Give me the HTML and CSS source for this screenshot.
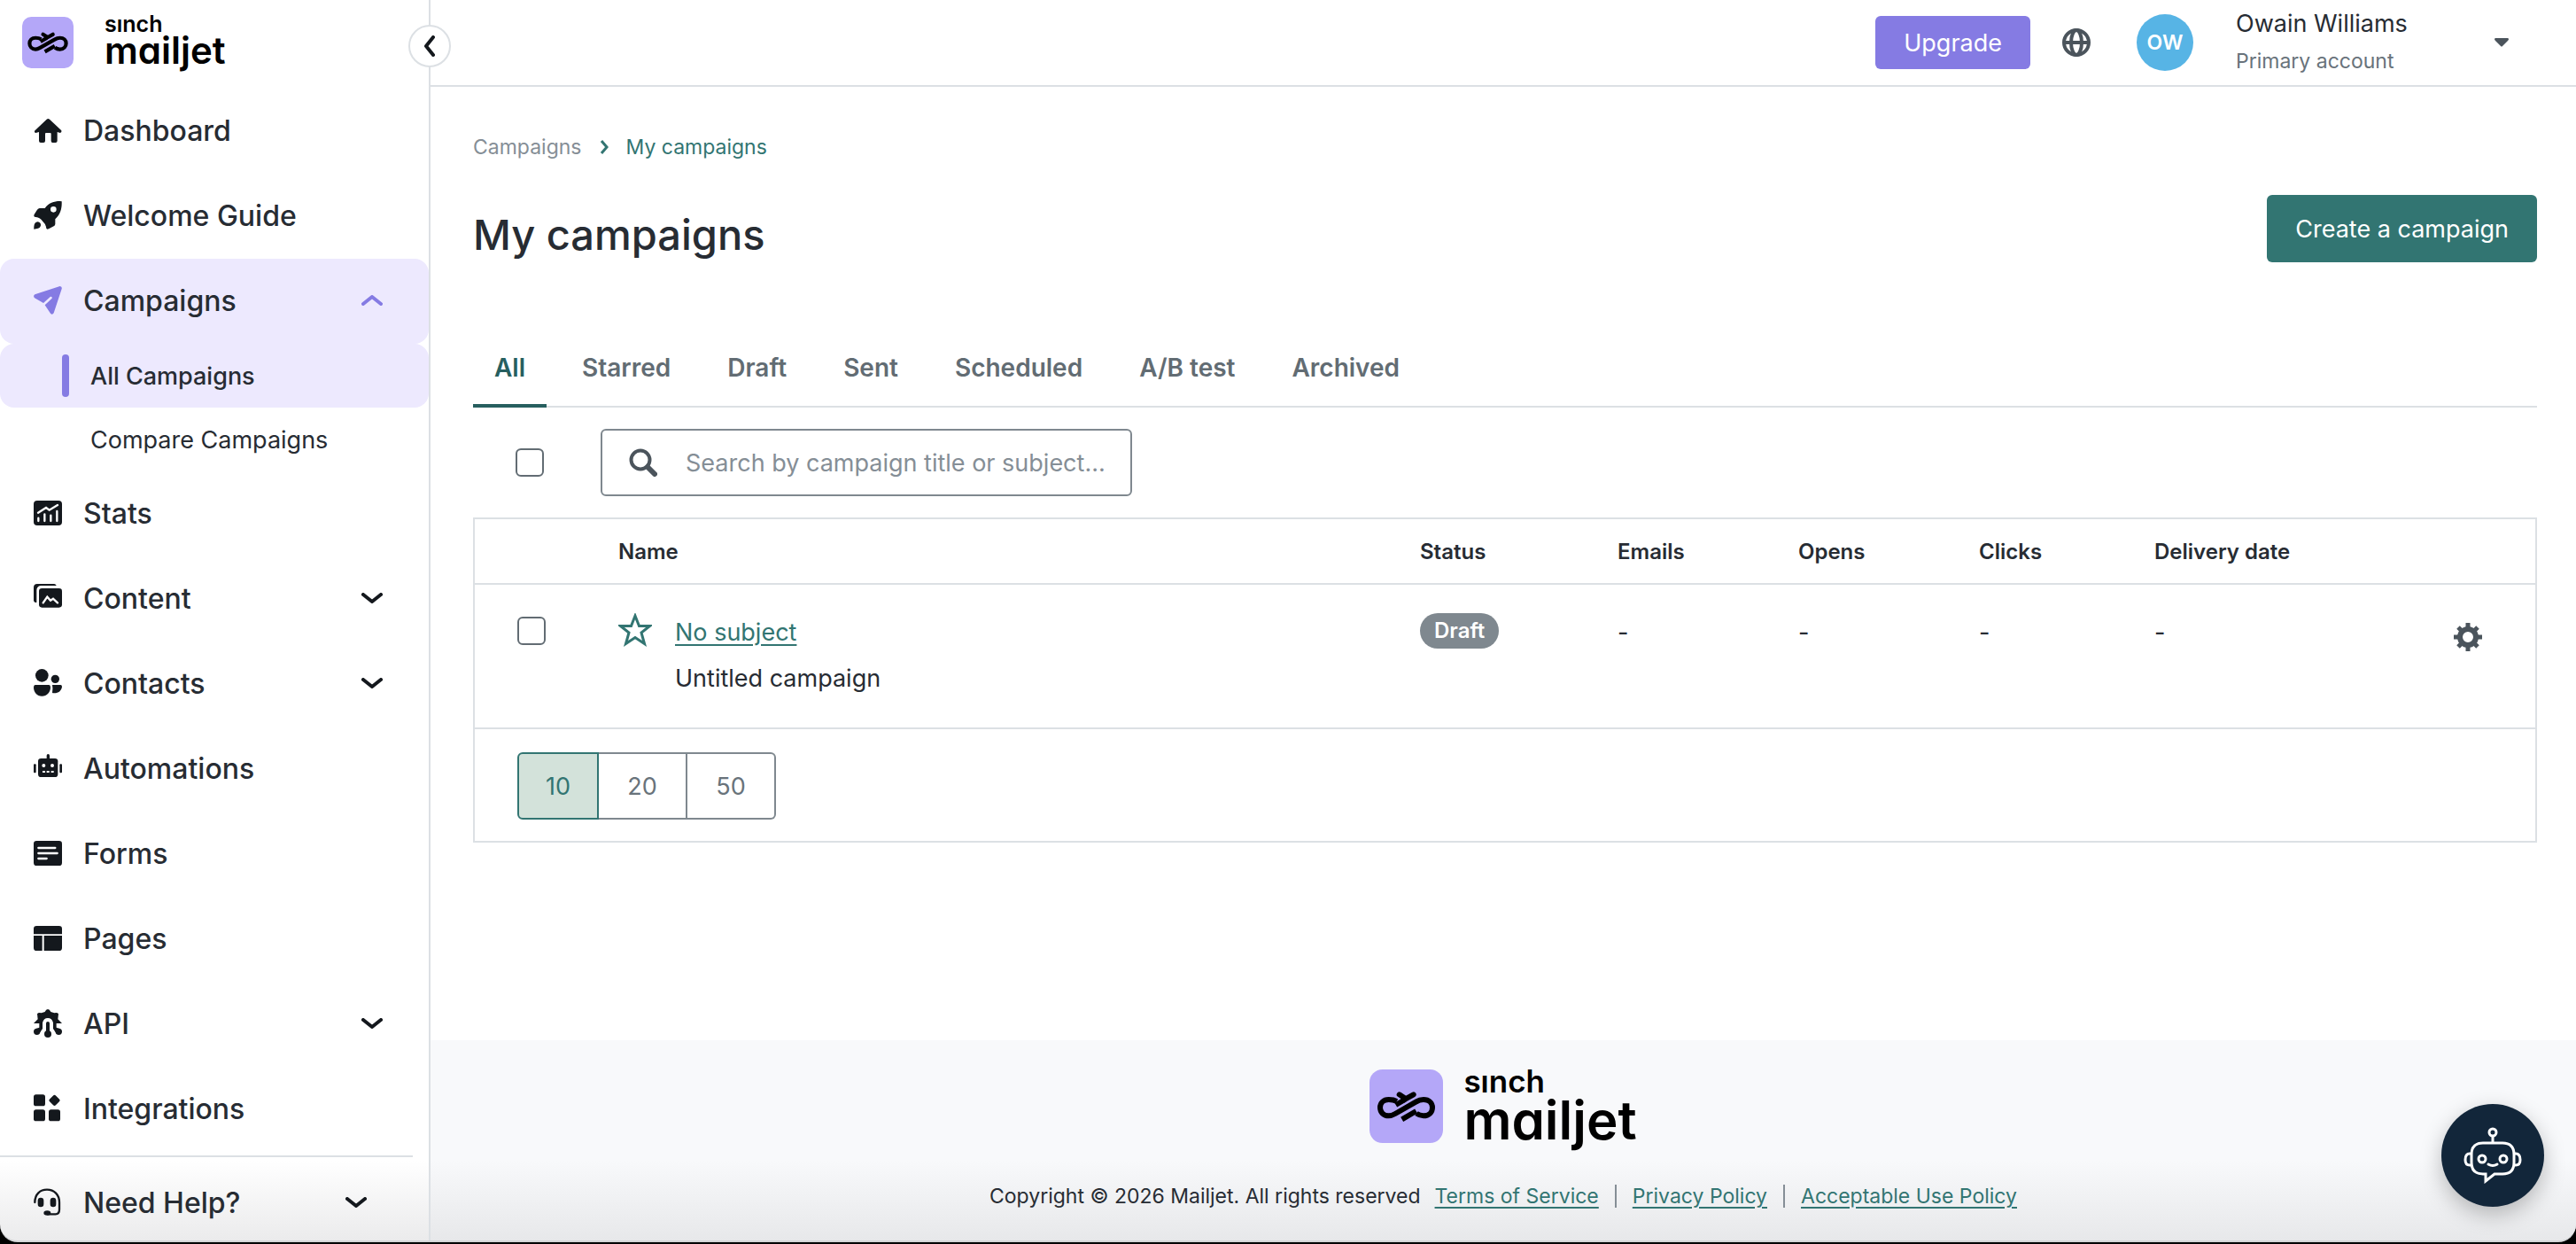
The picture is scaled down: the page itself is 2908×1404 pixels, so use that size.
FILE: index.html
```html
<!DOCTYPE html>
<html lang="en">
<head>
    <meta charset="UTF-8">
    <meta name="viewport" content="width=device-width, initial-scale=1.0">
    <title>My campaigns</title>
    <link rel="stylesheet" href="styles.css">
</head>
<body>
    <div class="app">
        <aside class="sidebar">
            <a href="#" class="logo">
                <svg class="logo-mark" viewBox="0 0 249 249" fill="none" stroke="#000" stroke-width="18">
                    <rect width="249" height="249" rx="44" fill="#b4a7f8" stroke="none"/>
                    <path d="M92 108C84 103 74 102 65 102C47 102 36 114 36 129C36 144 47 157 65 157C74 157 80 154 87 150L157 110C165 105 174 102 183 102C202 102 213 114 213 129C213 144 202 157 183 157C174 157 166 154 159 149"/>
                    <path d="M110 169L158 141M89 120L120 102" />
                    <path d="M115 104L149 85M101 85L118 96" stroke-linecap="round"/>
                </svg>
                <span class="logo-text"><span class="sinch">sınch</span><span class="mailjet">mailjet</span></span>
            </a>
            <nav class="menu">
                <a href="#" class="item">
                    <svg class="icon" viewBox="0 0 96 96"><path d="M44 11Q49 7 54 11L94 49Q96 56 90 57L80 54V84Q80 90 74 90H64Q59 90 59 84V60Q59 57 56 57H42Q39 57 39 60V84Q39 90 33 90H24Q18 90 18 84V54L7 57Q1 56 3 50Z"/></svg>
                    <span>Dashboard</span>
                </a>
                <a href="#" class="item">
                    <svg class="icon" viewBox="0 0 96 96"><path fill-rule="evenodd" d="M95 1C96 22 92 44 73 61V78Q72 83 68 85L51 94Q42 98 42 88Q41 78 31 69Q22 56 8 54Q-2 54 2 45L11 31Q14 25 20 24L38 24C50 6 70 0 88 0Q94 0 95 1ZM67 18A10 10 0 1 0 67 38A10 10 0 1 0 67 18Z"/><path d="M1 95C0 80 4 70 14 70Q25 73 24 82Q23 91 12 93Z"/></svg>
                    <span>Welcome Guide</span>
                </a>
                <a href="#" class="item active">
                    <svg class="icon" viewBox="0 0 96 96"><path d="M89 0Q97 1 95 9L68 91Q63 99 57 92L38 64L62 41Q64 35 57 35L33 57L3 40Q-3 33 4 28Z"/></svg>
                    <span>Campaigns</span>
                    <svg class="arrow" viewBox="0 0 24 12"><path d="M2 10L12 2L22 10"/></svg>
                </a>
                <a href="#" class="subitem active">All Campaigns</a>
                <a href="#" class="subitem">Compare Campaigns</a>
                <a href="#" class="item">
                    <svg class="icon" viewBox="0 0 96 96"><rect y="6" width="96" height="84" rx="12"/><path class="cut" d="M15 47L42 30L53 38L81 21M16 65V75M37 52V75M58 56V75M79 42V75"/></svg>
                    <span>Stats</span>
                </a>
                <a href="#" class="item">
                    <svg class="icon" viewBox="0 0 96 96"><path d="M0 56V12Q0 0 12 0H70Q76 1 77 6H24Q10 8 10 22V63Q1 63 0 56Z"/><rect x="18" y="15" width="78" height="65" rx="10"/><path class="cut" d="M32 64L46 44L57 56L66 50L81 64"/></svg>
                    <span>Content</span>
                    <svg class="arrow" viewBox="0 0 24 12"><path d="M2 2L12 10L22 2"/></svg>
                </a>
                <a href="#" class="item">
                    <svg class="icon" viewBox="0 0 96 96"><circle cx="28" cy="22" r="22"/><circle cx="73" cy="34" r="14"/><path d="M5 54H52Q57 54 57 62C57 78 45 92 28 92C11 92 0 78 0 62Q0 54 5 54ZM63 54H91Q96 54 96 60C94 74 84 82 70 82Q63 82 63 80Q66 68 63 54Z"/></svg>
                    <span>Contacts</span>
                    <svg class="arrow" viewBox="0 0 24 12"><path d="M2 2L12 10L22 2"/></svg>
                </a>
                <a href="#" class="item">
                    <svg class="icon" viewBox="0 0 96 96"><rect x="15" y="15" width="67" height="63" rx="10"/><rect x="44" width="10" height="20" rx="5"/><rect y="34" width="8" height="30" rx="3"/><rect x="88" y="34" width="8" height="30" rx="3"/><circle cx="34" cy="39" r="6" fill="#fff"/><circle cx="63" cy="39" r="6" fill="#fff"/><path fill="#fff" d="M30 57h9v6h-9zM44 57h9v6h-9zM59 57h9v6h-9z"/></svg>
                    <span>Automations</span>
                </a>
                <a href="#" class="item">
                    <svg class="icon" viewBox="0 0 96 96"><rect y="6" width="96" height="84" rx="10"/><path class="cut" d="M16 30H73M16 48H80M16 66H44"/></svg>
                    <span>Forms</span>
                </a>
                <a href="#" class="item">
                    <svg class="icon" viewBox="0 0 96 96"><path d="M10 6H86Q96 6 96 16V34H0V16Q0 6 10 6ZM0 39H29V90H10Q0 90 0 80ZM35 39H96V80Q96 90 86 90H35Z"/></svg>
                    <span>Pages</span>
                </a>
                <a href="#" class="item">
                    <svg class="icon" viewBox="0 0 96 96"><path d="M0 48L14 34L12 16Q16 10 26 13L38 9Q42 0 48 0Q54 0 58 9L70 13Q80 10 84 16L82 34L96 48H77V62L88 66V82L78 84L66 66V46Q62 30 48 30Q34 30 30 46V66L18 84L8 82V66L19 62V48Z"/><circle cx="11" cy="76" r="11"/><circle cx="85" cy="76" r="11"/><circle cx="48" cy="84" r="12"/><rect x="42" y="42" width="12" height="40" rx="6"/></svg>
                    <span>API</span>
                    <svg class="arrow" viewBox="0 0 24 12"><path d="M2 2L12 10L22 2"/></svg>
                </a>
                <a href="#" class="item">
                    <svg class="icon" viewBox="0 0 96 96"><rect y="1" width="39" height="39" rx="8"/><rect y="52" width="39" height="39" rx="8"/><rect x="51" y="52" width="39" height="39" rx="8"/><rect x="56" y="6" width="29" height="29" rx="6" transform="rotate(45 70.500 20.500)"/></svg>
                    <span>Integrations</span>
                </a>
            </nav>
            <button class="item help">
                <svg class="icon" viewBox="0 0 96 96"><path fill="none" stroke="currentColor" stroke-width="7" stroke-linecap="round" d="M4 48C4 20 22 5 45 5C70 5 87 22 87 48V72Q87 88 74 88H48"/><rect x="14" y="32" width="20" height="32" rx="10"/><rect x="56" y="32" width="20" height="32" rx="10"/><ellipse cx="46" cy="84" rx="12" ry="8"/></svg>
                <span>Need Help?</span>
                <svg class="arrow" viewBox="0 0 24 12"><path d="M2 2L12 10L22 2"/></svg>
            </button>
            <button class="collapse" aria-label="Collapse menu">
                <svg viewBox="0 0 12 24" width="12" height="24"><path d="M10 2L2 12L10 22"/></svg>
            </button>
        </aside>

        <div class="page">
            <header class="topbar">
                <button class="btn upgrade">Upgrade</button>
                <button class="globe" aria-label="Language">
                    <svg viewBox="0 0 32 32" width="32" height="32" fill="none" stroke="#4b545c" stroke-width="4"><circle cx="16" cy="16" r="14"/><ellipse cx="16" cy="16" rx="6" ry="14"/><path d="M2 16H30"/></svg>
                </button>
                <button class="account">
                    <span class="avatar">OW</span>
                    <span class="account-text"><span class="account-name">Owain Williams</span><span class="account-type">Primary account</span></span>
                    <svg viewBox="0 0 16 10" width="16" height="10"><path fill="#4b545c" d="M1 0H15Q17 1 15 3L9 9Q8 10 7 9L1 3Q-1 1 1 0Z"/></svg>
                </button>
            </header>

            <main class="content">
                <nav class="breadcrumb">
                    <a href="#">Campaigns</a>
                    <svg viewBox="0 0 10 16" width="10" height="16"><path d="M2 1L8 8L2 15"/></svg>
                    <a href="#" class="current">My campaigns</a>
                </nav>
                <div class="title-row">
                    <h1>My campaigns</h1>
                    <button class="btn create">Create a campaign</button>
                </div>
                <div class="tabs">
                    <button class="tab active">All</button>
                    <button class="tab">Starred</button>
                    <button class="tab">Draft</button>
                    <button class="tab">Sent</button>
                    <button class="tab">Scheduled</button>
                    <button class="tab">A/B test</button>
                    <button class="tab">Archived</button>
                </div>
                <div class="filters">
                    <input type="checkbox" class="check" aria-label="Select all campaigns">
                    <label class="search">
                        <svg viewBox="0 0 32 32" width="32" height="32"><circle cx="13" cy="13" r="10.500" fill="none" stroke="#4b545c" stroke-width="4"/><path d="M21 21L29 29" stroke="#4b545c" stroke-width="6" stroke-linecap="round"/></svg>
                        <input type="text" placeholder="Search by campaign title or subject..." aria-label="Search campaigns">
                    </label>
                </div>

                <table class="campaigns">
                    <colgroup>
                        <col class="col-check"><col><col class="col-status"><col class="col-count"><col class="col-count"><col class="col-clicks"><col class="col-date"><col class="col-gear">
                    </colgroup>
                    <thead>
                        <tr>
                            <th></th>
                            <th>Name</th>
                            <th>Status</th>
                            <th>Emails</th>
                            <th>Opens</th>
                            <th>Clicks</th>
                            <th>Delivery date</th>
                            <th></th>
                        </tr>
                    </thead>
                    <tbody>
                        <tr>
                            <td><input type="checkbox" class="check" aria-label="Select campaign"></td>
                            <td>
                                <div class="name">
                                    <button class="star" aria-label="Star">
                                        <svg viewBox="0 0 38 38" width="38" height="38"><path d="M19 3L23.500 14.500H35.500L26 22L29.500 34.500L19 27.500L8.500 34.500L12 22L2.500 14.500H14.500Z" fill="none" stroke="#327572" stroke-width="3"/></svg>
                                    </button>
                                    <div>
                                        <a href="#">No subject</a>
                                        <p>Untitled campaign</p>
                                    </div>
                                </div>
                            </td>
                            <td><span class="badge">Draft</span></td>
                            <td>-</td>
                            <td>-</td>
                            <td>-</td>
                            <td>-</td>
                            <td>
                                <button class="gear" aria-label="Campaign settings">
                                    <svg viewBox="0 0 32 32" width="32" height="32"><circle cx="16" cy="16" r="9" fill="none" stroke="#4b545c" stroke-width="6"/><path d="M16 0V6M16 26V32M0 16H6M26 16H32M5 5L9 9M23 23L27 27M5 27L9 23M23 9L27 5" stroke="#4b545c" stroke-width="5"/></svg>
                                </button>
                            </td>
                        </tr>
                    </tbody>
                </table>
                <div class="pager">
                    <div class="sizes">
                        <button class="active">10</button>
                        <button>20</button>
                        <button>50</button>
                    </div>
                </div>
            </main>

            <footer class="footer">
                <div class="logo big">
                    <svg class="logo-mark" viewBox="0 0 249 249" fill="none" stroke="#000" stroke-width="18">
                        <rect width="249" height="249" rx="44" fill="#b4a7f8" stroke="none"/>
                        <path d="M92 108C84 103 74 102 65 102C47 102 36 114 36 129C36 144 47 157 65 157C74 157 80 154 87 150L157 110C165 105 174 102 183 102C202 102 213 114 213 129C213 144 202 157 183 157C174 157 166 154 159 149"/>
                        <path d="M110 169L158 141M89 120L120 102" />
                        <path d="M115 104L149 85M101 85L118 96" stroke-linecap="round"/>
                    </svg>
                    <span class="logo-text"><span class="sinch">sınch</span><span class="mailjet">mailjet</span></span>
                </div>
                <div class="legal">
                    <span>Copyright © 2026 Mailjet. All rights reserved</span>
                    <ul>
                        <li><a href="#">Terms of Service</a></li>
                        <li><a href="#">Privacy Policy</a></li>
                        <li><a href="#">Acceptable Use Policy</a></li>
                    </ul>
                </div>
            </footer>
        </div>

        <button class="chat" aria-label="Open chat">
            <svg viewBox="0 0 66 64" width="66" height="64" fill="none" stroke="#fff" stroke-width="3">
                <circle cx="33" cy="6" r="4"/>
                <path d="M33 10V18M22 18H44Q57 18 57 31V40Q57 53 44 53H35L25 61V53H22Q9 53 9 40V31Q9 18 22 18Z"/>
                <path d="M9 30H7Q2 30 2 37Q2 43 7 43H9M57 30H59Q64 30 64 37Q64 43 59 43H57"/>
                <circle cx="21" cy="36" r="4"/><circle cx="45" cy="36" r="4"/>
                <path d="M28 42Q33 45 38 42" stroke-linecap="round"/>
            </svg>
        </button>
    </div>
</body>
</html>
```

FILE: styles.css
```css
* {
    box-sizing: border-box;
}
body {
    margin: 0;
    background: #000;
    font-family: Inter, "Liberation Sans", sans-serif;
    font-size: 27px;
    color: #272c33;
}
a {
    color: inherit;
    text-decoration: none;
}
button {
    font: inherit;
    color: inherit;
    background: none;
    border: none;
    padding: 0;
    cursor: pointer;
}
svg {
    display: block;
    flex: none;
}
.app {
    display: flex;
    position: relative;
    min-height: calc(100vh - 2px);
    background: linear-gradient(to top, #ebebec, #fff 90px);
    border-bottom: 2px solid #d3d4d6;
    border-radius: 0 0 20px 20px;
    overflow: hidden;
}

/* Sidebar */
.sidebar {
    width: 486px;
    flex: none;
    position: relative;
    border-right: 2px solid #dce0e4;
    display: flex;
    flex-direction: column;
}
.logo {
    display: flex;
    height: 100px;
    padding: 11px 25px 0;
    gap: 35px;
    color: #000;
}
.logo-mark {
    width: 58px;
    height: 58px;
    margin-top: 8px;
}
.logo-text {
    display: flex;
    flex-direction: column;
    font-weight: 600;
    font-feature-settings: "cv11";
}
.sinch {
    font-size: 25px;
    line-height: 32px;
}
.mailjet {
    font-size: 42px;
    line-height: 28px;
}
.item {
    display: flex;
    align-items: center;
    height: 96px;
    padding: 0 52px 2px 38px;
    gap: 24px;
    font-size: 32px;
    font-weight: 500;
}
.icon {
    width: 32px;
    height: 32px;
    fill: currentColor;
    color: #14181d;
}
.icon .cut {
    fill: none;
    stroke: #fff;
    stroke-width: 7;
    stroke-linecap: round;
}
.arrow {
    width: 24px;
    height: 12px;
    margin-left: auto;
}
.arrow path,
.collapse path {
    fill: none;
    stroke: #14181d;
    stroke-width: 4;
    stroke-linecap: round;
    stroke-linejoin: round;
}
.item.active,
.subitem.active {
    background: #ede9fe;
    border-radius: 16px;
}
.item.active .icon {
    color: #857be3;
}
.item.active .arrow path {
    stroke: #857be3;
}
.subitem {
    display: flex;
    align-items: center;
    height: 72px;
    padding-left: 102px;
    font-size: 27px;
}
.subitem.active {
    padding-left: 70px;
    gap: 24px;
    font-weight: 500;
}
.subitem.active::before {
    content: "";
    width: 8px;
    height: 48px;
    border-radius: 4px;
    background: #857be3;
}
.item.help {
    width: 466px;
    margin-top: 4px;
    border-top: 2px solid #dce0e4;
    flex: 1;
    padding-top: 10px;
}
.collapse {
    position: absolute;
    top: 28px;
    right: -25px;
    width: 48px;
    height: 48px;
    border: 2px solid #dce0e4;
    border-radius: 50%;
    background: #fff;
    display: flex;
    align-items: center;
    justify-content: center;
    z-index: 2;
}

/* Top bar */
.page {
    flex: 1;
    min-width: 0;
    display: flex;
    flex-direction: column;
}
.topbar {
    display: flex;
    justify-content: flex-end;
    align-items: center;
    height: 98px;
    padding-right: 76px;
    border-bottom: 2px solid #dce0e4;
    background: #fff;
}
.btn {
    border-radius: 6px;
    color: #fff;
    padding: 0 32px;
    font-size: 27px;
}
.upgrade {
    height: 60px;
    background: #857be3;
}
.globe {
    margin: 0 52px 0 36px;
}
.account {
    display: flex;
    align-items: center;
    gap: 48px;
    text-align: left;
}
.avatar {
    width: 64px;
    height: 64px;
    border-radius: 50%;
    background: #57b4e5;
    color: #fff;
    font-size: 23px;
    font-weight: 600;
    display: flex;
    align-items: center;
    justify-content: center;
}
.account-text {
    display: flex;
    flex-direction: column;
    width: 244px;
    line-height: 42px;
}
.account-type {
    font-size: 23px;
    color: #69737b;
}

/* Content */
.content {
    flex: 1;
    padding: 48px 44px 48px 48px;
    background: #fff;
}
.breadcrumb {
    display: flex;
    align-items: center;
    gap: 20px;
    height: 40px;
    font-size: 23px;
    color: #858e96;
}
.breadcrumb path {
    fill: none;
    stroke: #327572;
    stroke-width: 3;
}
.breadcrumb .current {
    color: #327572;
}
.title-row {
    display: flex;
    justify-content: space-between;
    margin-top: 34px;
}
h1 {
    margin: 12px 0 0;
    font-size: 47px;
    line-height: 66px;
    font-weight: 500;
}
.create {
    height: 76px;
    background: #327572;
}
.tabs {
    display: flex;
    gap: 16px;
    margin-top: 76px;
    border-bottom: 2px solid #dce0e4;
}
.tab {
    height: 86px;
    margin-bottom: -2px;
    padding: 0 24px;
    font-size: 28px;
    font-weight: 600;
    color: #626c73;
    border-bottom: 4px solid transparent;
}
.tab.active {
    color: #275f5f;
    border-color: #275f5f;
}
.filters {
    display: flex;
    align-items: center;
    gap: 64px;
    padding: 24px 48px;
}
.check {
    appearance: none;
    display: block;
    width: 32px;
    height: 32px;
    margin: 0;
    border: 2px solid #626c73;
    border-radius: 6px;
    background: #fff;
}
.check:checked {
    background: #327572;
}
.search {
    display: flex;
    align-items: center;
    gap: 32px;
    width: 600px;
    height: 76px;
    padding: 0 20px 0 30px;
    border: 2px solid #7f888f;
    border-radius: 6px;
}
.search input {
    flex: 1;
    min-width: 0;
    font: inherit;
    color: inherit;
    padding: 0;
    border: none;
    outline: none;
}
.search input::placeholder {
    color: #858e96;
}

/* Campaign table */
.campaigns {
    width: 100%;
    table-layout: fixed;
    border-collapse: separate;
    border-spacing: 0;
    border: 2px solid #dce0e4;
}
.col-check {
    width: 114px;
}
.col-status {
    width: 223px;
}
.col-count {
    width: 204px;
}
.col-clicks {
    width: 198px;
}
.col-date {
    width: 338px;
}
.col-gear {
    width: 140px;
}
.campaigns th,
.campaigns td {
    padding: 0 0 0 48px;
    text-align: left;
    border-bottom: 2px solid #dce0e4;
}
.campaigns th {
    height: 74px;
    font-size: 24px;
    font-weight: 600;
}
.campaigns td {
    height: 161px;
    padding-top: 32px;
    line-height: 44px;
    vertical-align: top;
    border-bottom: none;
}
.campaigns td .check {
    margin-top: 4px;
}
.name {
    display: flex;
    gap: 26px;
}
.name a {
    color: #327572;
    text-decoration: underline;
    text-underline-offset: 4px;
}
.name p {
    margin: 8px 0 0;
}
.star,
.gear {
    display: block;
    height: 38px;
}
.gear {
    margin-top: 8px;
}
.badge {
    display: block;
    width: fit-content;
    height: 40px;
    padding: 0 16px;
    border-radius: 20px;
    background: #7f888f;
    color: #fff;
    font-size: 24px;
    line-height: 40px;
    font-weight: 600;
}
.pager {
    padding: 26px 48px 24px;
    border: 2px solid #dce0e4;
    border-top: none;
}
.sizes {
    display: flex;
    width: fit-content;
}
.sizes button {
    width: 100px;
    height: 76px;
    border: 2px solid #7f888f;
    border-left: none;
    color: #69737b;
}
.sizes button:last-child {
    border-radius: 0 6px 6px 0;
}
.sizes button.active {
    width: 92px;
    border: 2px solid #327572;
    border-radius: 6px 0 0 6px;
    background: #d3e2da;
    color: #327572;
}

/* Footer */
.footer {
    height: 226px;
    display: flex;
    flex-direction: column;
    align-items: center;
    background: linear-gradient(to top, #e7e8ea, #f8f9fb 90px);
}
.logo.big {
    height: 148px;
    padding-top: 25px;
    gap: 23px;
}
.big .logo-mark {
    width: 83px;
    height: 83px;
}
.big .sinch {
    font-size: 35px;
    line-height: 42px;
}
.big .mailjet {
    font-size: 60px;
    line-height: 46px;
}
.legal {
    display: flex;
    gap: 16px;
    font-size: 23px;
    line-height: 56px;
}
.legal ul {
    display: flex;
    align-items: center;
    margin: 0;
    padding: 0;
    list-style: none;
}
.legal li {
    line-height: 26px;
}
.legal li + li {
    margin-left: 18px;
    padding-left: 18px;
    border-left: 2px solid #858e96;
}
.legal a {
    color: #327572;
    text-decoration: underline;
    text-underline-offset: 4px;
}
.chat {
    position: absolute;
    right: 36px;
    bottom: 38px;
    width: 116px;
    height: 116px;
    border-radius: 50%;
    background: #12263a;
    box-shadow: 0 8px 24px rgba(0, 0, 0, 0.25);
    display: flex;
    align-items: center;
    justify-content: center;
}
```
